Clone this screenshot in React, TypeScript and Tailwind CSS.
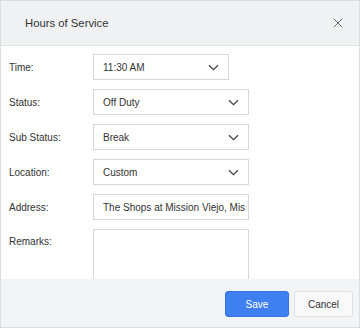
import { X } from 'lucide-react';

const Chevron = () => (
  <svg width="11" height="7" viewBox="0 0 11 7" className="shrink-0">
    <path d="M1 1.2 L5.5 5.7 L10 1.2" fill="none" stroke="#444" strokeWidth="1.3" />
  </svg>
);

function SelectBox({ value, width }: { value: string; width: string }) {
  return (
    <div className={`${width} h-[26px] border border-[#d5d7db] bg-white flex items-center justify-between pl-[9px] pr-[9px]`}>
      <span className="text-[10px] text-[#333]">{value}</span>
      <Chevron />
    </div>
  );
}

export default function App() {
  const rows = [
    { label: 'Time:', value: '11:30 AM', width: 'w-[136px]' },
    { label: 'Status:', value: 'Off Duty', width: 'w-[156px]' },
    { label: 'Sub Status:', value: 'Break', width: 'w-[156px]' },
    { label: 'Location:', value: 'Custom', width: 'w-[156px]' },
  ];

  return (
    <div className="w-[360px] h-[328px] border border-[#dcdde0] bg-white flex flex-col overflow-hidden font-['Liberation_Sans',Arial,sans-serif]">
      {/* Header */}
      <div className="h-[45px] shrink-0 bg-[#f0f1f3] border-b border-[#e2e3e6] flex items-center justify-between pl-[24px] pr-[13px]">
        <h1 className="text-[11.3px] text-[#333]">Hours of Service</h1>
        <X size={16} strokeWidth={1.3} className="text-[#555]" />
      </div>

      {/* Body */}
      <div className="flex-1 overflow-hidden pt-[8px] pl-[8px] flex flex-col gap-[9px]">
        {rows.map(r => (
          <div key={r.label} className="flex items-center">
            <label className="w-[84px] text-[10px] text-[#333]">{r.label}</label>
            <SelectBox value={r.value} width={r.width} />
          </div>
        ))}
        <div className="flex items-center">
          <label className="w-[84px] text-[10px] text-[#333]">Address:</label>
          <div className="w-[156px] h-[26px] border border-[#d5d7db] bg-white flex items-center pl-[9px] overflow-hidden">
            <span className="text-[10px] text-[#333] whitespace-nowrap">The Shops at Mission Viejo, Mis</span>
          </div>
        </div>
        <div className="flex items-start">
          <label className="w-[84px] text-[10px] text-[#333] pt-[5px]">Remarks:</label>
          <div className="w-[156px] h-[70px] shrink-0 border border-[#d5d7db] bg-white" />
        </div>
      </div>

      {/* Footer */}
      <div className="h-[48px] shrink-0 bg-[#f3f4f6] flex items-center justify-end gap-[5px] pr-[6px] pt-[2px]">
        <button className="w-[64px] h-[26px] rounded-[3px] bg-[#3f80f0] border border-[#3574e3] text-white text-[10px]">Save</button>
        <button className="w-[59px] h-[26px] rounded-[3px] bg-[#f9f9fa] border border-[#dfe0e3] text-[#333] text-[10px]">Cancel</button>
      </div>
    </div>
  );
}
